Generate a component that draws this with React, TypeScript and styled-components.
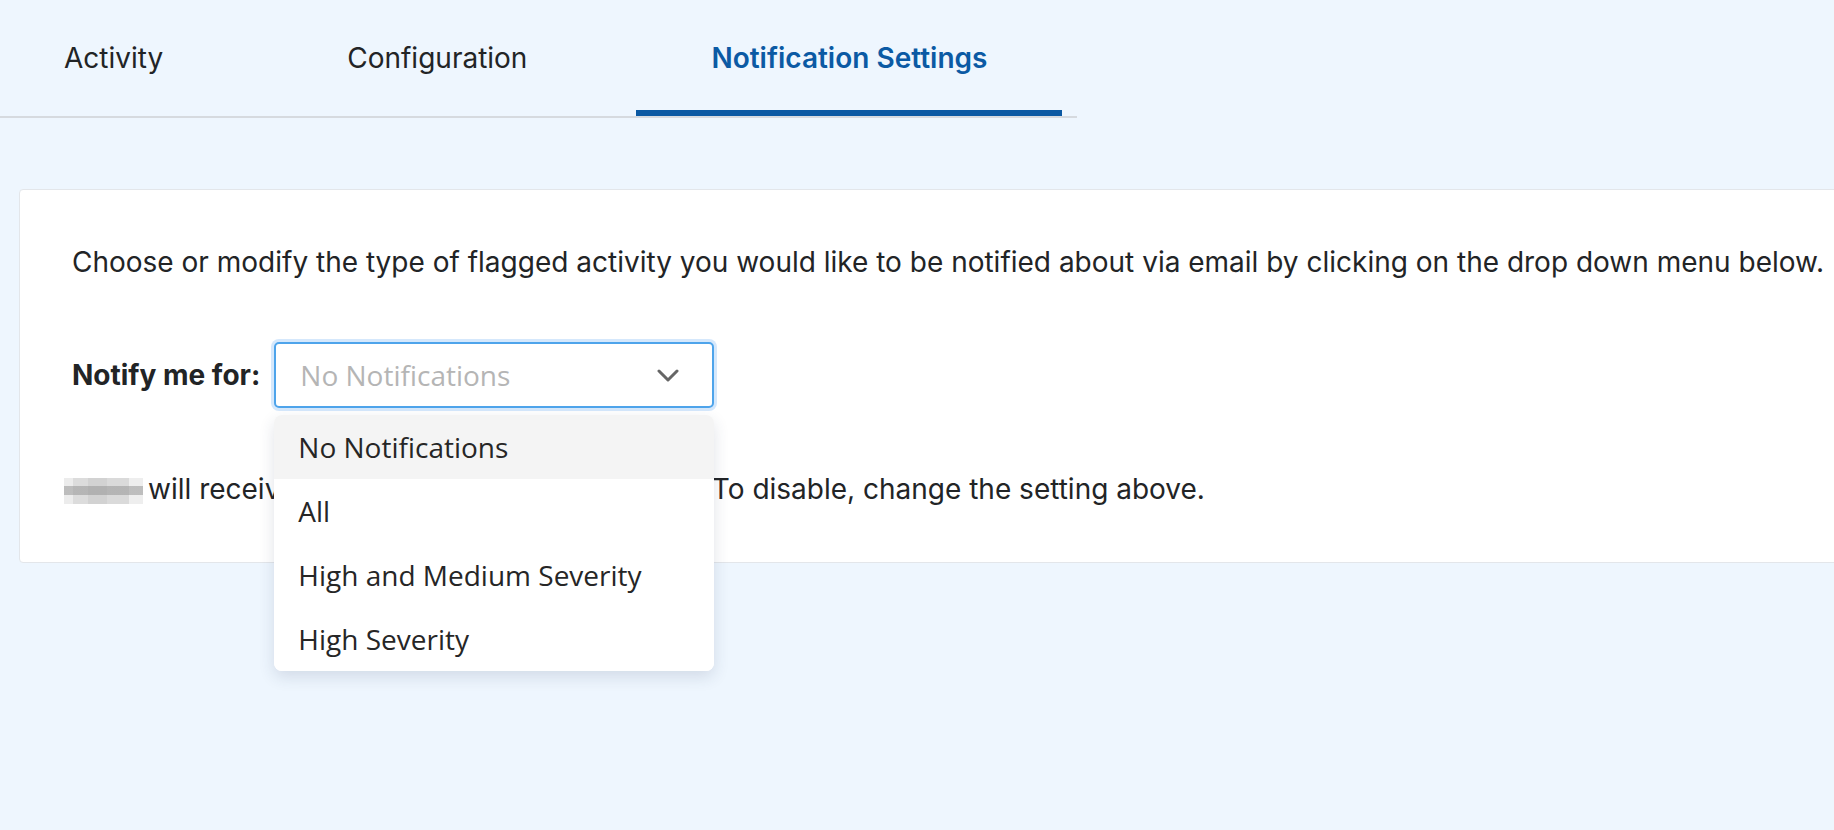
import styled, { createGlobalStyle } from "styled-components";

const GlobalStyle = createGlobalStyle`
  html, body {
    margin: 0;
    padding: 0;
    background: #eef6fe;
    overflow: hidden;
  }
  body {
    font-family: Inter, "Liberation Sans", sans-serif;
    color: #222426;
  }
`;

const Page = styled.div`
  min-height: 830px;
  background: #eef6fe;
`;

const TabList = styled.div`
  display: flex;
  gap: 34px;
  width: 1077px;
  border-bottom: 2px solid #d6dadf;
`;

const Tab = styled.div<{ $active?: boolean }>`
  height: 116px;
  box-sizing: border-box;
  padding: 6px 75px 0;
  display: flex;
  align-items: center;
  font-size: 28px;
  font-weight: ${(p) => (p.$active ? 600 : 400)};
  color: ${(p) => (p.$active ? "#0b5aa4" : "#222426")};
  border-bottom: 6px solid ${(p) => (p.$active ? "#0b59a3" : "transparent")};
  cursor: pointer;

  &:first-child {
    padding-left: 64px;
  }
`;

const Card = styled.div`
  margin: 71px -60px 0 19px;
  background: #ffffff;
  border: 1px solid #e3e6ea;
  border-radius: 4px;
  padding: 52px 52px 53px;
`;

const Text = styled.p`
  margin: 0;
  font-size: 28px;
  line-height: 40px;
  color: #222426;
  white-space: nowrap;
`;

const Row = styled.div`
  display: flex;
  align-items: center;
  gap: 14px;
  margin: 60px 0 61px;
`;

const Label = styled.span`
  font-size: 28px;
  line-height: 40px;
  font-weight: 700;
  color: #222426;
`;

const SelectWrap = styled.div`
  position: relative;
`;

const SelectBox = styled.div`
  width: 440px;
  height: 66px;
  box-sizing: border-box;
  border: 2px solid #4ea4eb;
  border-radius: 5px;
  box-shadow: 0 0 0 3px #d5e8fc;
  background: #ffffff;
  display: flex;
  align-items: center;
  justify-content: space-between;
  padding: 0 33px 0 24px;
  font-family: "Open Sans", "Noto Sans", sans-serif;
  font-size: 28px;
  color: #b5b5b5;
`;

const Menu = styled.div`
  position: absolute;
  top: calc(100% + 7px);
  left: 0;
  width: 440px;
  background: #ffffff;
  border-radius: 8px;
  box-shadow: 0 6px 16px rgba(40, 60, 90, 0.14);
  overflow: hidden;
  z-index: 2;
`;

const Option = styled.div<{ $highlighted?: boolean }>`
  height: 64px;
  display: flex;
  align-items: center;
  padding: 0 24px;
  font-family: "Open Sans", "Noto Sans", sans-serif;
  font-size: 28px;
  color: #262626;
  background: ${(p) => (p.$highlighted ? "#f4f4f4" : "#ffffff")};
`;

const Redacted = styled.span`
  display: inline-block;
  width: 79px;
  height: 26px;
  margin: 0 5px 0 -8px;
  vertical-align: -5px;
  background:
    linear-gradient(180deg, transparent 0 30%, rgba(150, 150, 150, 0.55) 30% 65%, transparent 65%),
    linear-gradient(90deg, #ececec 0 12%, #dcdcdc 12% 30%, #d2d2d2 30% 55%, #dadada 55% 82%, #eeeeee 82%);
`;

const options = ["No Notifications", "All", "High and Medium Severity", "High Severity"];

export default function App() {
  return (
    <Page>
      <GlobalStyle />
      <TabList>
        <Tab>Activity</Tab>
        <Tab>Configuration</Tab>
        <Tab $active>Notification Settings</Tab>
      </TabList>
      <Card>
        <Text>
          Choose or modify the type of flagged activity you would like to be notified about via email by
          clicking on the drop down menu below.
        </Text>
        <Row>
          <Label>Notify me for:</Label>
          <SelectWrap>
            <SelectBox>
              <span>No Notifications</span>
              <svg width="22" height="13" viewBox="0 0 22 13" fill="none">
                <path d="M2 2l9 9 9-9" stroke="#666666" strokeWidth="3" strokeLinecap="round" strokeLinejoin="round" />
              </svg>
            </SelectBox>
            <Menu>
              {options.map((o, i) => (
                <Option key={o} $highlighted={i === 0}>
                  {o}
                </Option>
              ))}
            </Menu>
          </SelectWrap>
        </Row>
        <Text>
          <Redacted />
          will receive e-mails about flagged activity. To disable, change the setting above.
        </Text>
      </Card>
    </Page>
  );
}
